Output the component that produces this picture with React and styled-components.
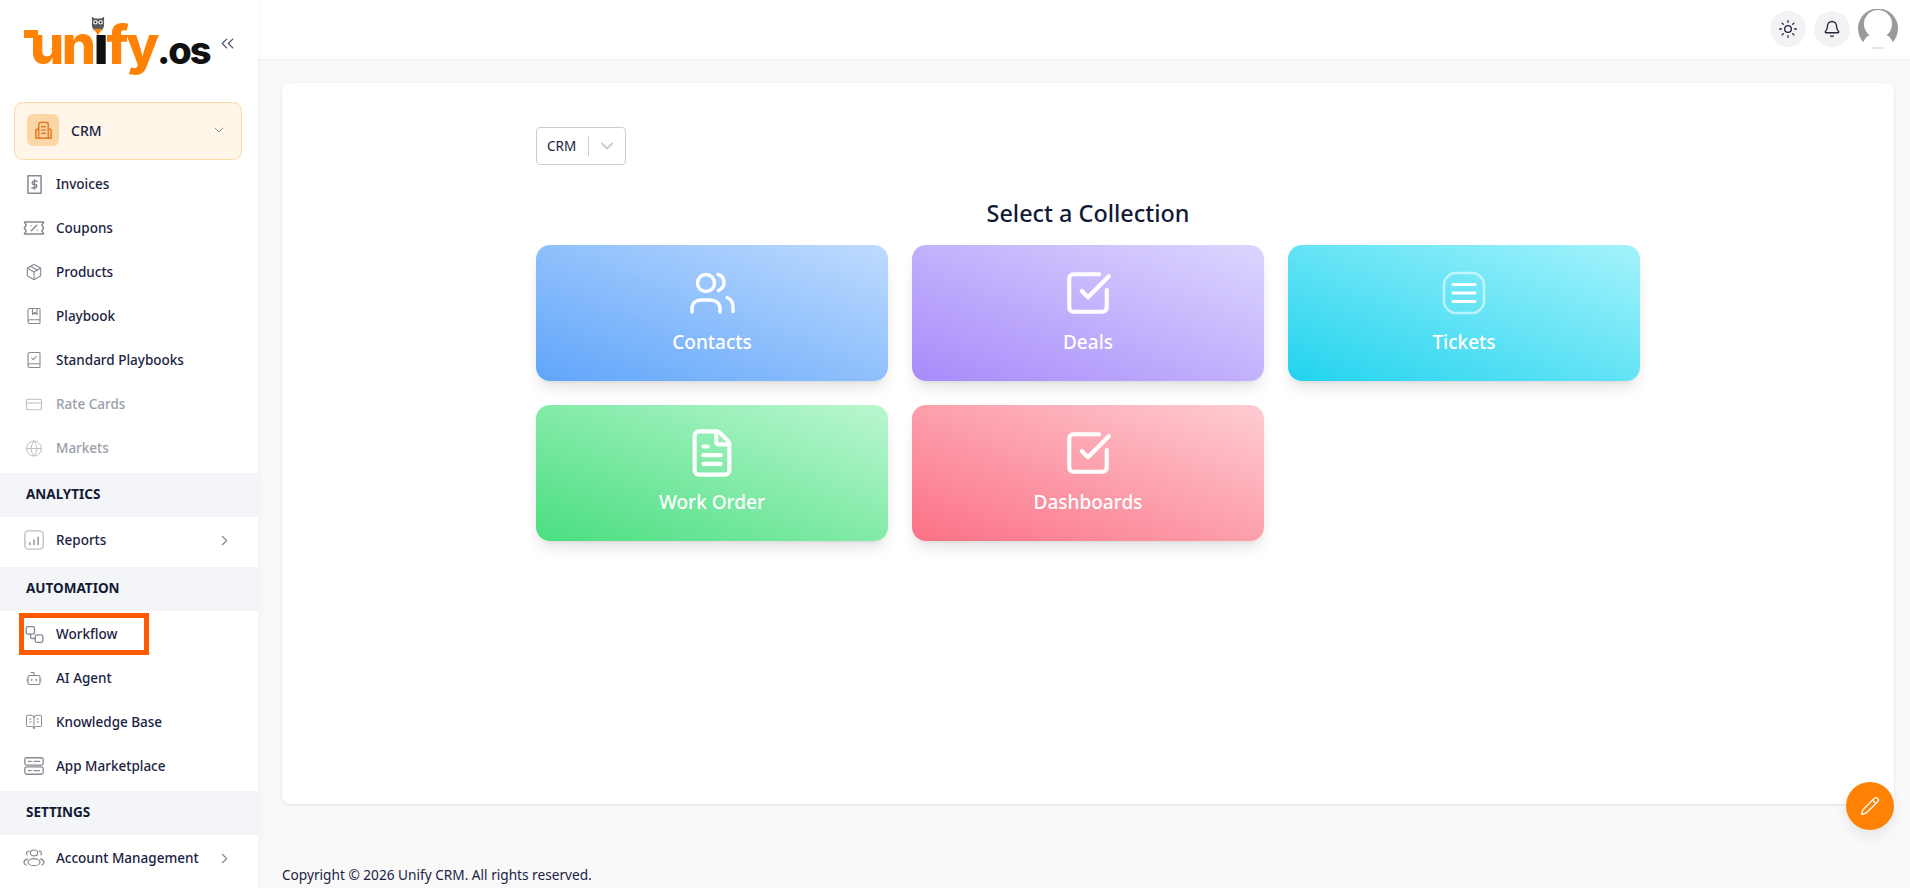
import styled, { createGlobalStyle } from 'styled-components'
import {
    Bell,
    BookCheck,
    BookMarked,
    BookOpenText,
    Bot,
    ChevronDown,
    ChevronRight,
    ChevronsLeft,
    CreditCard,
    FileText,
    Globe,
    Package,
    Pencil,
    SquareCheckBig,
    Sun,
} from 'lucide-react'

const FONT = `'Noto Sans', 'Open Sans', sans-serif`

const GlobalStyle = createGlobalStyle`
    html, body {
        margin: 0;
        padding: 0;
        background: #f9f9fa;
        font-family: ${FONT};
        color: #1a2342;
    }
    * {
        box-sizing: border-box;
    }
`

const Page = styled.div`
    display: flex;
    width: 1910px;
    height: 888px;
    overflow: hidden;
`

const Sidebar = styled.aside`
    width: 258px;
    flex-shrink: 0;
    background: #fff;
    box-shadow: 2px 0 8px rgba(0, 0, 0, 0.03);
    z-index: 1;
`

const LogoRow = styled.div`
    height: 102px;
    padding: 14px 20px 0 24px;
    display: flex;
    justify-content: space-between;
    align-items: flex-start;
`

const Logo = styled.div`
    position: relative;
    display: flex;
    align-items: baseline;
    height: 62px;
    font-family: 'Inter', sans-serif;
    font-weight: 800;
    font-size: 54px;
    line-height: 62px;
    letter-spacing: -2.5px;
    color: #ff8205;
    margin-left: 6px;
`

const LogoTail = styled.span`
    position: absolute;
    left: -6px;
    top: 16px;
    width: 14px;
    height: 8px;
    background: #ff8205;
`

const LogoDark = styled.span`
    color: #111;
`

const LogoSuffix = styled.span`
    color: #111;
    font-size: 38px;
    letter-spacing: -2px;
    font-weight: 800;
`

const OwlMark = styled.svg`
    position: absolute;
    left: 61px;
    top: 2px;
    width: 14px;
    height: 20px;
`

const CollapseButton = styled.div`
    display: flex;
    flex-shrink: 0;
    margin-top: 19px;
    color: #4b5063;
`

const ModuleSelect = styled.div`
    display: flex;
    align-items: center;
    height: 58px;
    margin: 0 16px 1px 14px;
    padding: 0 14px 2px 12px;
    background: #fff6e9;
    border: 1px solid #fdd9a3;
    border-radius: 9px;
`

const ModuleIcon = styled.div`
    width: 32px;
    height: 32px;
    display: flex;
    align-items: center;
    justify-content: center;
    background: #fdd6a5;
    border-radius: 6px;
    color: #e2822d;
`

const ModuleName = styled.span`
    flex: 1;
    margin-left: 12px;
    font-size: 14px;
    font-weight: 500;
`

const NavGroup = styled.div`
    padding: 1px 0 ${(props) => props.$bottom}px;
`

const NavItem = styled.div`
    position: relative;
    display: flex;
    align-items: center;
    height: 44px;
    padding: 0 25px 0 25px;
    font-size: 13.5px;
    font-weight: 500;
    color: ${(props) => (props.$muted ? '#9a9ea8' : '#1a2342')};
`

const NavIcon = styled.span`
    width: 18px;
    height: 18px;
    margin-right: 13px;
    display: flex;
    align-items: center;
    justify-content: center;
    color: #858a92;
    opacity: ${(props) => (props.$muted ? 0.55 : 1)};
`

const NavLabel = styled.span`
    flex: 1;
`

const Caret = styled.span`
    display: flex;
    color: #7f848d;
`

const SectionTitle = styled.div`
    height: 44px;
    display: flex;
    align-items: center;
    padding: 0 26px 2px;
    background: #f4f5f9;
    font-size: 13.5px;
    font-weight: 700;
    color: #131a35;
`

const Highlight = styled.div`
    position: absolute;
    left: 19px;
    top: 1px;
    width: 130px;
    height: 42px;
    border: 5px solid #ff5a00;
`

const Main = styled.div`
    flex: 1;
    min-width: 0;
    display: flex;
    flex-direction: column;
`

const Header = styled.header`
    height: 60px;
    display: flex;
    align-items: center;
    justify-content: flex-end;
    gap: 8px;
    padding: 0 12px 1px 0;
    background: #fff;
    border-bottom: 1px solid #f0f0f1;
`

const HeaderButton = styled.button`
    width: 36px;
    height: 36px;
    padding: 0;
    display: flex;
    align-items: center;
    justify-content: center;
    border: 0;
    border-radius: 50%;
    background: #f3f3f6;
    color: #22263a;
`

const Avatar = styled.svg`
    width: 40px;
    height: 40px;
`

const Content = styled.main`
    flex: 1;
    padding: 23px 16px 0 24px;
`

const Panel = styled.section`
    height: 721px;
    padding: 44px 254px 0;
    background: #fff;
    border-radius: 8px;
    box-shadow: 0 1px 3px rgba(0, 0, 0, 0.1);
`

const Selector = styled.div`
    width: 90px;
    height: 38px;
    display: flex;
    align-items: center;
    padding-left: 10px;
    border: 1px solid #ccc;
    border-radius: 4px;
    font-size: 13.5px;
`

const SelectorValue = styled.span`
    width: 41px;
`

const SelectorLine = styled.span`
    width: 1px;
    height: 20px;
    background: #ccc;
`

const SelectorArrow = styled.span`
    display: flex;
    margin-left: 8px;
    color: #ccc;
`

const Title = styled.h2`
    margin: 32px 0 16px;
    text-align: center;
    font-size: 23.4px;
    line-height: 32px;
    font-weight: 500;
    color: #131a35;
`

const CollectionGrid = styled.div`
    display: grid;
    grid-template-columns: repeat(3, 352px);
    grid-auto-rows: 136px;
    gap: 24px;
`

const CollectionCard = styled.div`
    display: flex;
    flex-direction: column;
    align-items: center;
    padding-top: 25px;
    border-radius: 14px;
    color: #fff;
    background: linear-gradient(
        to top right,
        ${(props) => props.$from},
        ${(props) => props.$to}
    );
    box-shadow: 0 10px 15px -3px rgba(0, 0, 0, 0.1),
        0 4px 6px -4px rgba(0, 0, 0, 0.1);
`

const CardIcon = styled.div`
    height: 46px;
    display: flex;
    align-items: center;
    justify-content: center;
`

const CardLabel = styled.div`
    margin-top: 13px;
    font-size: 19px;
    line-height: 26px;
    font-weight: 500;
`

const Footer = styled.footer`
    height: 48px;
    padding: 61px 0 0;
    font-size: 13.65px;
    line-height: 20px;
    white-space: nowrap;
    color: #1a2342;
`

const EditButton = styled.button`
    position: fixed;
    left: 1846px;
    top: 782px;
    width: 48px;
    height: 48px;
    padding: 0;
    display: flex;
    align-items: center;
    justify-content: center;
    border: 0;
    border-radius: 50%;
    background: #ff8205;
    color: #fff;
    box-shadow: 0 6px 14px rgba(0, 0, 0, 0.08);
`

const Outline = ({ size = 18, width = 1.5, children }) => (
    <svg
        width={size}
        height={size}
        viewBox="0 0 24 24"
        fill="none"
        stroke="currentColor"
        strokeWidth={width}
        strokeLinecap="round"
        strokeLinejoin="round"
        style={{ flexShrink: 0 }}
    >
        {children}
    </svg>
)

const InvoiceIcon = () => (
    <Outline size={21} width={1.7}>
        <path d="M4.500 2h15v20h-15z" />
        <path d="M15 8.300h-3.800a1.800 1.800 0 0 0 0 3.700h1.600a1.800 1.800 0 0 1 0 3.700H9M12 6.500v11" />
    </Outline>
)

const CouponIcon = () => (
    <Outline size={22} width={1.6}>
        <path d="M1.500 5.500h21l-2 3.200 2 3.300-2 3.300 2 3.200h-21l2-3.200-2-3.300 2-3.300z" />
        <path d="M9 15l6-6M8.500 9.500h.01M15.500 14.500h.01" />
    </Outline>
)

const ReportsIcon = () => (
    <Outline size={22}>
        <rect x="2" y="2" width="20" height="20" rx="4" opacity="0.55" />
        <path d="M7.500 17v-2M12 17v-5M16.500 17V9" />
    </Outline>
)

const WorkflowIcon = () => (
    <Outline size={19} width={1.7}>
        <rect x="1.500" y="2" width="10.500" height="9.500" rx="2" />
        <rect x="13" y="12.500" width="9.500" height="9.500" rx="2" />
        <path d="M7 11.500V15a2 2 0 0 0 2 2h4" />
    </Outline>
)

const MarketplaceIcon = () => (
    <Outline size={22} width={1.4}>
        <rect x="2" y="3" width="20" height="8" rx="2" />
        <rect x="2" y="13" width="20" height="8" rx="2" />
        <path d="M6 7h3M12 7h6M6 17h3M12 17h6" />
    </Outline>
)

const AccountIcon = () => (
    <Outline size={22} width={1.3}>
        <ellipse cx="12" cy="6.500" rx="4" ry="3.200" />
        <ellipse cx="12" cy="16.500" rx="6.500" ry="3.800" />
        <path d="M6.500 4.500a2.400 2.400 0 0 0-2 4M17.500 4.500a2.400 2.400 0 0 1 2 4M4.800 13C2.800 13.800 1 15.500 1 17s1 2 2.500 2.600M19.200 13c2 .8 3.800 2.500 3.800 4s-1 2-2.500 2.600" />
    </Outline>
)

const BuildingIcon = () => (
    <Outline size={23} width={1.7}>
        <path d="M7 20V6A2.500 2.500 0 0 1 9.500 3.500h5A2.500 2.500 0 0 1 17 6v14" />
        <path d="M7 10.500H6a2 2 0 0 0-2 2V20h16v-7.500a2 2 0 0 0-2-2h-1" />
        <path d="M10 8h4M10 11.500h4M10 15h4" />
    </Outline>
)

const ContactsIcon = () => (
    <svg
        width="46"
        height="42"
        viewBox="0 0 46 42"
        fill="none"
        stroke="currentColor"
        strokeWidth="3.400"
        strokeLinecap="round"
    >
        <circle cx="17" cy="11" r="8.500" />
        <path d="M3 40v-3c0-6 4-9 9-9h9c6 0 10 3 10 9v3" />
        <path d="M29 2.500c4 1 6 4.500 6 8s-2 6.500-5.500 8" />
        <path d="M38 25.500c3.500 1.500 6 4.500 6 9v5" />
    </svg>
)

const TicketsIcon = () => (
    <svg
        width="44"
        height="44"
        viewBox="0 0 44 44"
        fill="none"
        stroke="currentColor"
        strokeLinecap="round"
    >
        <rect x="2" y="2" width="40" height="40" rx="12" strokeWidth="2.500" opacity="0.55" />
        <path d="M11 13.500h22M11 22h22M11 30.500h22" strokeWidth="3.200" />
    </svg>
)

const OWL = (
    <OwlMark viewBox="0 0 15 20">
        <path d="M1 0l3 2h7l3-2v9c0 4-3 7-6.500 7S1 13 1 9z" fill="#55585c" />
        <circle cx="4.700" cy="6" r="2.500" fill="#e8e8e8" />
        <circle cx="10.300" cy="6" r="2.500" fill="#e8e8e8" />
        <circle cx="4.700" cy="6" r="1" fill="#222" />
        <circle cx="10.300" cy="6" r="1" fill="#222" />
        <path d="M3 13h9l-4.500 7z" fill="#ff8205" />
    </OwlMark>
)

const MAIN_ITEMS = [
    { label: 'Invoices', icon: <InvoiceIcon /> },
    { label: 'Coupons', icon: <CouponIcon /> },
    { label: 'Products', icon: <Package size={22} strokeWidth={1.5} /> },
    { label: 'Playbook', icon: <BookMarked size={22} strokeWidth={1.5} /> },
    { label: 'Standard Playbooks', icon: <BookCheck size={22} strokeWidth={1.5} /> },
    { label: 'Rate Cards', icon: <CreditCard size={23} strokeWidth={1.5} />, muted: true },
    { label: 'Markets', icon: <Globe size={21} strokeWidth={1.3} />, muted: true },
]

const AUTOMATION_ITEMS = [
    { label: 'Workflow', icon: <WorkflowIcon />, marked: true },
    { label: 'AI Agent', icon: <Bot size={23} strokeWidth={1.5} /> },
    { label: 'Knowledge Base', icon: <BookOpenText size={24} strokeWidth={1.3} /> },
    { label: 'App Marketplace', icon: <MarketplaceIcon /> },
]

const COLLECTIONS = [
    { label: 'Contacts', from: '#60a5fa', to: '#bfdbfe', icon: <ContactsIcon /> },
    { label: 'Deals', from: '#a78bfa', to: '#ddd6fe', icon: <SquareCheckBig size={50} strokeWidth={2} /> },
    { label: 'Tickets', from: '#22d3ee', to: '#a5f3fc', icon: <TicketsIcon /> },
    { label: 'Work Order', from: '#4ade80', to: '#bbf7d0', icon: <FileText size={52} strokeWidth={1.9} /> },
    { label: 'Dashboards', from: '#fb7185', to: '#fecdd3', icon: <SquareCheckBig size={50} strokeWidth={2} /> },
]

const Row = ({ label, icon, muted, marked, caret }) => (
    <NavItem $muted={muted}>
        <NavIcon $muted={muted}>{icon}</NavIcon>
        <NavLabel>{label}</NavLabel>
        {caret && (
            <Caret>
                <ChevronRight size={17} strokeWidth={1.5} />
            </Caret>
        )}
        {marked && <Highlight />}
    </NavItem>
)

const App = () => {
    return (
        <Page>
            <GlobalStyle />
            <Sidebar>
                <LogoRow>
                    <Logo>
                        <LogoTail />
                        un<LogoDark>ı</LogoDark>fy
                        <LogoSuffix>.os</LogoSuffix>
                        {OWL}
                    </Logo>
                    <CollapseButton>
                        <ChevronsLeft size={21} strokeWidth={1.4} />
                    </CollapseButton>
                </LogoRow>
                <ModuleSelect>
                    <ModuleIcon>
                        <BuildingIcon />
                    </ModuleIcon>
                    <ModuleName>CRM</ModuleName>
                    <ChevronDown size={16} strokeWidth={1.5} color="#8b90a0" />
                </ModuleSelect>
                <NavGroup $bottom={3}>
                    {MAIN_ITEMS.map((item) => (
                        <Row key={item.label} {...item} />
                    ))}
                </NavGroup>
                <SectionTitle>ANALYTICS</SectionTitle>
                <NavGroup $bottom={5}>
                    <Row label="Reports" icon={<ReportsIcon />} caret />
                </NavGroup>
                <SectionTitle>AUTOMATION</SectionTitle>
                <NavGroup $bottom={3}>
                    {AUTOMATION_ITEMS.map((item) => (
                        <Row key={item.label} {...item} />
                    ))}
                </NavGroup>
                <SectionTitle>SETTINGS</SectionTitle>
                <NavGroup $bottom={0}>
                    <Row label="Account Management" icon={<AccountIcon />} caret />
                </NavGroup>
            </Sidebar>
            <Main>
                <Header>
                    <HeaderButton>
                        <Sun size={20} strokeWidth={1.6} />
                    </HeaderButton>
                    <HeaderButton>
                        <Bell size={18} strokeWidth={1.8} />
                    </HeaderButton>
                    <Avatar viewBox="0 0 40 40">
                        <circle cx="20" cy="19.500" r="20" fill="#9a9a9a" />
                        <circle cx="20" cy="15" r="14" fill="#fff" />
                        <path d="M0 41l5-7q3-8 8-8h14q5 0 8 8l5 7z" fill="#fff" />
                        <path d="M14 39h12" stroke="#cfcfcf" strokeWidth="1" />
                    </Avatar>
                </Header>
                <Content>
                    <Panel>
                        <Selector>
                            <SelectorValue>CRM</SelectorValue>
                            <SelectorLine />
                            <SelectorArrow>
                                <ChevronDown size={20} strokeWidth={2.4} />
                            </SelectorArrow>
                        </Selector>
                        <Title>Select a Collection</Title>
                        <CollectionGrid>
                            {COLLECTIONS.map((card) => (
                                <CollectionCard
                                    key={card.label}
                                    $from={card.from}
                                    $to={card.to}
                                >
                                    <CardIcon>{card.icon}</CardIcon>
                                    <CardLabel>{card.label}</CardLabel>
                                </CollectionCard>
                            ))}
                        </CollectionGrid>
                    </Panel>
                    <Footer>Copyright © 2026 Unify CRM. All rights reserved.</Footer>
                </Content>
            </Main>
            <EditButton>
                <Pencil size={20} strokeWidth={1.6} />
            </EditButton>
        </Page>
    )
}

export default App
